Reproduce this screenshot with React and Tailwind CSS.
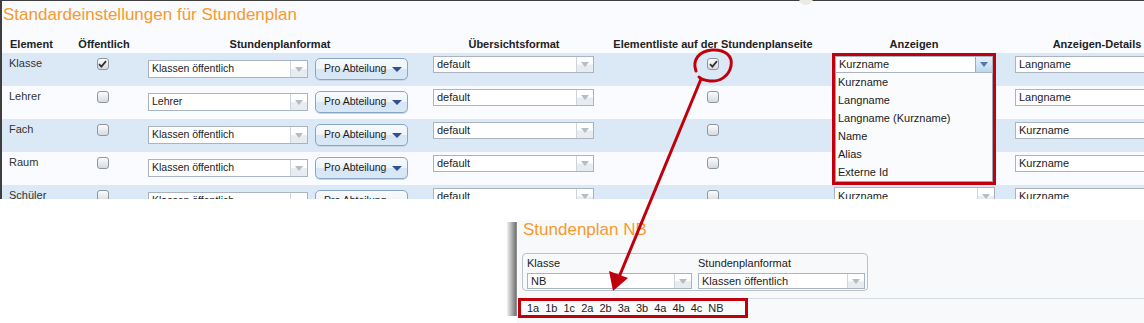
import React from 'react';

function Select({ value, className = '', text = 'text-[11px]', active = false }) {
  return (
    <div className={`flex shrink-0 bg-white border border-[#aab4c1] ${className}`}>
      <div className={`flex-1 min-w-0 flex items-center pl-[3px] whitespace-nowrap overflow-hidden text-[#1c1c1c] ${text}`}>{value}</div>
      <div
        className={`w-[17px] shrink-0 border-l flex items-center justify-center ${
          active
            ? 'border-[#8fb0d0] bg-[linear-gradient(#e6f0fa_0%,#d3e5f5_50%,#bcd6ee_100%)]'
            : 'border-[#cfd5dd] bg-[linear-gradient(#ffffff_0%,#ffffff_45%,#e7ecf1_55%,#e7ecf1_100%)]'
        }`}
      >
        <svg width="8" height="5" viewBox="0 0 8 5">
          <path d="M0 0h8L4 5z" fill={active ? '#4a7ab0' : '#b4bcc6'} />
        </svg>
      </div>
    </div>
  );
}

function Checkbox({ checked }) {
  return (
    <div className="w-[12px] h-[12px] shrink-0 rounded-[3px] border border-[#8e979f] bg-[linear-gradient(#fcfcfc,#d6dade)] flex items-center justify-center">
      {checked && (
        <svg width="9" height="8" viewBox="0 0 9 8">
          <path d="M1 4.2 L3.4 6.6 L8 1.2" stroke="#333" strokeWidth="1.8" fill="none" />
        </svg>
      )}
    </div>
  );
}

function ProButton() {
  return (
    <div className="w-[93px] h-[22px] shrink-0 rounded-[5px] border border-[#8aa6c4] bg-[linear-gradient(#f7fafd_0%,#eef4fa_48%,#d6e6f6_52%,#d9e8f6_100%)] flex items-center justify-between pl-[8px] pr-[5px] text-[10.5px] text-[#1c1c1c] shadow-[0_1px_0_#c8d6e4]">
      <span>Pro Abteilung</span>
      <svg width="10" height="5" viewBox="0 0 10 5">
        <path d="M0 0h10L5 5z" fill="#34508c" />
      </svg>
    </div>
  );
}

const rows = [
  { name: 'Klasse', pub: true, fmt: 'Klassen öffentlich', list: true, anz: 'Kurzname', det: 'Langname', blue: true },
  { name: 'Lehrer', pub: false, fmt: 'Lehrer', list: false, anz: 'Kurzname', det: 'Langname', blue: false },
  { name: 'Fach', pub: false, fmt: 'Klassen öffentlich', list: false, anz: 'Kurzname', det: 'Kurzname', blue: true },
  { name: 'Raum', pub: false, fmt: 'Klassen öffentlich', list: false, anz: 'Kurzname', det: 'Kurzname', blue: false },
  { name: 'Schüler', pub: false, fmt: 'Klassen öffentlich', list: false, anz: 'Kurzname', det: 'Kurzname', blue: true },
];

const options = ['Kurzname', 'Langname', 'Langname (Kurzname)', 'Name', 'Alias', 'Externe Id'];
const tags = ['1a', '1b', '1c', '2a', '2b', '3a', '3b', '4a', '4b', '4c', 'NB'];

export default function App() {
  return (
    <div className="relative w-[1144px] h-[323px] overflow-hidden bg-white font-['Liberation_Sans',Arial,sans-serif]">
      {/* Top panel */}
      <div className="w-[1144px] h-[199px] overflow-hidden border-t border-l-2 border-[#3e3e3e] bg-[#f9fbfe]">
        <div className="h-[34px] pt-[3px] pl-[1px] text-[17px] leading-[22px] text-[#f79a2c] whitespace-nowrap">
          Standardeinstellungen für Stundenplan
        </div>
        <div className="flex h-[18px] items-center text-[11px] font-bold text-[#222] whitespace-nowrap">
          <div className="w-[68px] shrink-0 pl-[8px]">Element</div>
          <div className="w-[65px] shrink-0 text-center pl-[3px]">Öffentlich</div>
          <div className="w-[290px] shrink-0 text-center">Stundenplanformat</div>
          <div className="w-[178px] shrink-0 text-center">Übersichtsformat</div>
          <div className="w-[220px] shrink-0 text-center">Elementliste auf der Stundenplanseite</div>
          <div className="w-[182px] shrink-0 text-center">Anzeigen</div>
          <div className="w-[184px] shrink-0 text-center">Anzeigen-Details</div>
        </div>
        {rows.map((r) => (
          <div key={r.name} className={`flex h-[33px] items-start ${r.blue ? 'bg-[#dbe9f6]' : 'bg-[#f9fbfe]'}`}>
            <div className="w-[68px] shrink-0 pl-[7px] pt-[4px] leading-[13px] text-[11px] text-[#333]">{r.name}</div>
            <div className="w-[65px] shrink-0 flex justify-center pt-[5px]">
              <Checkbox checked={r.pub} />
            </div>
            <div className="w-[290px] shrink-0 flex items-start pl-[13px] gap-[7px]">
              <Select value={r.fmt} className="mt-[7px] w-[160px] h-[18px]" text="text-[10.5px]" />
              <div className="mt-[5px]">
                <ProButton />
              </div>
            </div>
            <div className="w-[178px] shrink-0 pl-[8px] pt-[3px]">
              <Select value="default" className="w-[161px] h-[17px]" />
            </div>
            <div className="w-[220px] shrink-0 flex justify-center pt-[5px]">
              <Checkbox checked={r.list} />
            </div>
            <div className="w-[182px] shrink-0 pl-[11px] pt-[2px]">
              <Select value={r.anz} className="w-[161px] h-[18px]" />
            </div>
            <div className="w-[184px] shrink-0 pl-[10px] pt-[3px]">
              <Select value={r.det} className="w-[170px] h-[17px]" />
            </div>
          </div>
        ))}
      </div>

      {/* Bottom: Stundenplan NB */}
      <div className="flex mt-[21px] pl-[507px] h-[103px]">
        <div className="w-[10px] shrink-0 mt-[2px] h-[94px] bg-[linear-gradient(to_right,#f2f2f2,#b8b8b8_40%,#7a7a7a_85%,#9a9a9a)]" />
        <div className="flex-1 flex flex-col bg-[#f8f9fb]">
          <div className="h-[20px] pl-[6px] text-[17px] leading-[20px] text-[#f79a2c] whitespace-nowrap">Stundenplan NB</div>
          <div className="mt-[13px] ml-[5px] w-[346px] h-[38px] rounded-[4px] border border-[#b9c1cb] flex gap-[6px] pl-[4px]">
            <div className="w-[165px] shrink-0 flex flex-col pt-[2px]">
              <div className="text-[11px] leading-[14px] text-[#222]">Klasse</div>
              <Select value="NB" className="mt-[3px] w-[165px] h-[16px]" />
            </div>
            <div className="w-[167px] shrink-0 flex flex-col pt-[2px]">
              <div className="text-[11px] leading-[14px] text-[#222]">Stundenplanformat</div>
              <Select value="Klassen öffentlich" className="mt-[3px] w-[167px] h-[16px]" />
            </div>
          </div>
          <div className="mt-[7px] flex items-stretch h-[20px]">
            <div className="ml-[1px] w-[230px] shrink-0 border-[3px] border-[#c0000c] bg-[#fafbfc] flex items-center gap-[6px] pl-[6px] text-[11px] text-[#222]">
              {tags.map((t) => (
                <span key={t}>{t}</span>
              ))}
            </div>
            <div className="flex-1 border-t border-[#d5dbe2]" />
          </div>
        </div>
      </div>

      {/* small circle on top border */}
      <div className="absolute left-[799px] top-[-9px] w-[14px] h-[14px] rounded-full bg-[#ebebe3]" />

      {/* Open dropdown with red highlight */}
      <div className="absolute left-[832px] top-[53px] w-[164px] h-[132px] border-[3px] border-[#c0000c] bg-[#f9fbfd] flex flex-col">
        <Select value="Kurzname" className="w-full h-[17px]" active />
        <div className="flex-1 border border-t-0 border-[#9aa4b0] bg-[#f9fbfd] text-[11px] text-[#1c1c1c]">
          {options.map((o) => (
            <div key={o} className="h-[18px] leading-[18px] pl-[2px] whitespace-nowrap">
              {o}
            </div>
          ))}
        </div>
      </div>

      {/* Red circle + arrow annotation */}
      <svg className="absolute left-0 top-0 pointer-events-none" width="1144" height="323" viewBox="0 0 1144 323">
        <path
          d="M696 71 C 692 60, 699 51, 712 50 C 725 49, 733 56, 731 66 C 729 76, 720 82, 710 81 C 705 80.5, 701 79, 699 77"
          stroke="#c0000c"
          strokeWidth="3"
          fill="none"
          strokeLinecap="round"
        />
        <path d="M701 79 L 617 282" stroke="#c0000c" strokeWidth="3" fill="none" />
        <polygon points="613,291 628,278 609,271" fill="#c0000c" />
      </svg>
    </div>
  );
}
